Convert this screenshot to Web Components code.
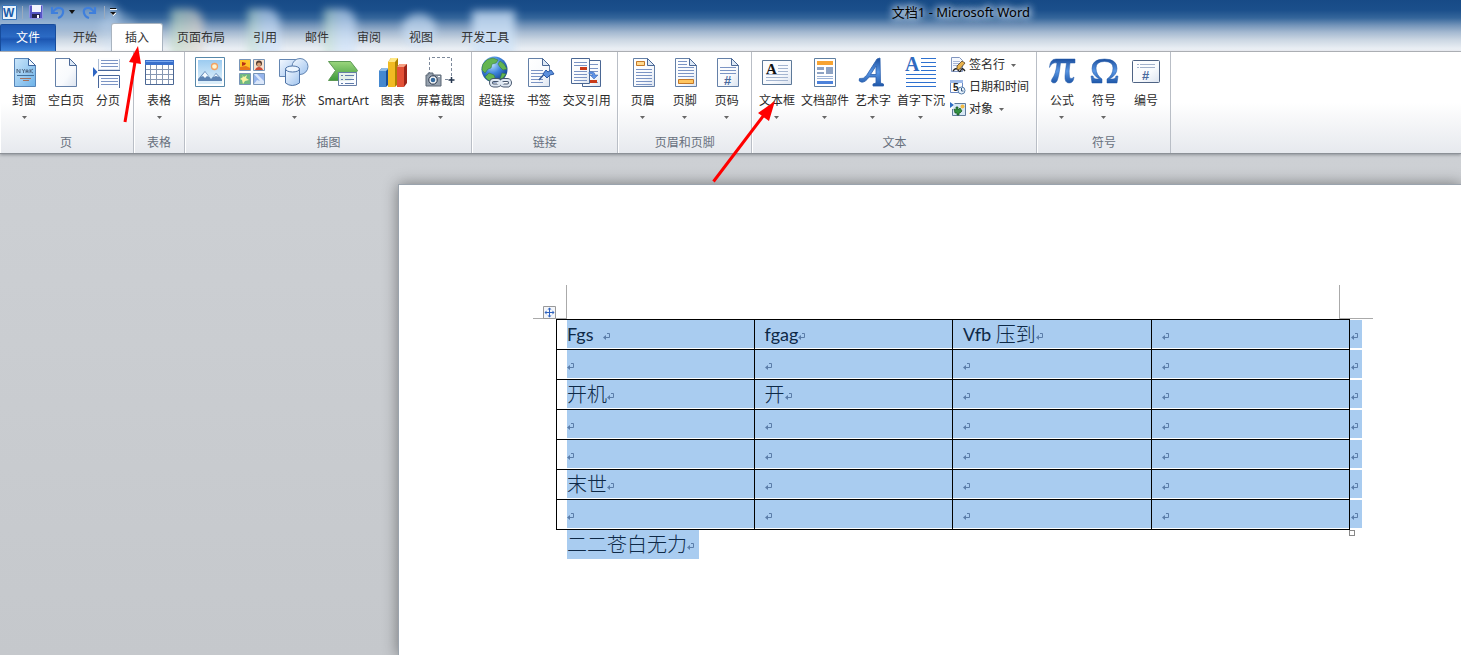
<!DOCTYPE html>
<html lang="zh-CN">
<head>
<meta charset="utf-8">
<title>文档1 - Microsoft Word</title>
<style>
html, body { margin: 0; height: 100%; }
body { font-family: "Noto Sans", "Noto Sans CJK SC", sans-serif; font-size: 12px; line-height: 16px; color: #2b2b2b; background: #cbced2; overflow: hidden; }
</style>
</head>
<body>
<word-app>
  <word-header slot="header" heading="文档1 - Microsoft Word">
    <ribbon-tab kind="file">文件</ribbon-tab>
    <ribbon-tab>开始</ribbon-tab>
    <ribbon-tab kind="active">插入</ribbon-tab>
    <ribbon-tab>页面布局</ribbon-tab>
    <ribbon-tab>引用</ribbon-tab>
    <ribbon-tab>邮件</ribbon-tab>
    <ribbon-tab>审阅</ribbon-tab>
    <ribbon-tab>视图</ribbon-tab>
    <ribbon-tab>开发工具</ribbon-tab>
  </word-header>
  <ribbon-bar slot="ribbon">
    <ribbon-group label="页">
      <ribbon-button icon="cover" drop>封面</ribbon-button>
      <ribbon-button icon="blank">空白页</ribbon-button>
      <ribbon-button icon="break">分页</ribbon-button>
    </ribbon-group>
    <ribbon-group label="表格">
      <ribbon-button icon="table" drop>表格</ribbon-button>
    </ribbon-group>
    <ribbon-group label="插图">
      <ribbon-button icon="picture">图片</ribbon-button>
      <ribbon-button icon="clipart">剪贴画</ribbon-button>
      <ribbon-button icon="shapes" drop>形状</ribbon-button>
      <ribbon-button icon="smartart">SmartArt</ribbon-button>
      <ribbon-button icon="chart">图表</ribbon-button>
      <ribbon-button icon="screenshot" drop>屏幕截图</ribbon-button>
    </ribbon-group>
    <ribbon-group label="链接">
      <ribbon-button icon="link">超链接</ribbon-button>
      <ribbon-button icon="bookmark">书签</ribbon-button>
      <ribbon-button icon="crossref">交叉引用</ribbon-button>
    </ribbon-group>
    <ribbon-group label="页眉和页脚">
      <ribbon-button icon="head" drop>页眉</ribbon-button>
      <ribbon-button icon="foot" drop>页脚</ribbon-button>
      <ribbon-button icon="pagenum" drop>页码</ribbon-button>
    </ribbon-group>
    <ribbon-group label="文本">
      <ribbon-button icon="textbox" drop>文本框</ribbon-button>
      <ribbon-button icon="parts" drop>文档部件</ribbon-button>
      <ribbon-button icon="wordart" drop>艺术字</ribbon-button>
      <ribbon-button icon="dropcap" drop>首字下沉</ribbon-button>
      <ribbon-stack>
        <ribbon-item icon="sign" drop>签名行</ribbon-item>
        <ribbon-item icon="date">日期和时间</ribbon-item>
        <ribbon-item icon="object" drop>对象</ribbon-item>
      </ribbon-stack>
    </ribbon-group>
    <ribbon-group label="符号">
      <ribbon-button icon="pi" drop>公式</ribbon-button>
      <ribbon-button icon="omega" drop>符号</ribbon-button>
      <ribbon-button icon="number">编号</ribbon-button>
    </ribbon-group>
  </ribbon-bar>
  <doc-page slot="page"></doc-page>
</word-app>

<script>
const pageShape = (x, y, w, h, extra = '') =>
  `<path d="M${x+.5} ${y+.5}h${w-8}l7 7v${h-8}h${-(w-1)}z" fill="url(#paper)" stroke="#6480a8"/><path d="M${x+w-7.5} ${y+.5}v7h7z" fill="#dce8f6" stroke="#4b6896" stroke-linejoin="round"/>${extra}`;
const lines = (x, w, ys, c = '#7b94c4') => `<path d="${ys.map(y => `M${x} ${y}.5h${w}`).join('')}" stroke="${c}"/>`;
const DEFS = `<defs>
 <linearGradient id="paper" x1="0" y1="0" x2="1" y2="1"><stop offset="0" stop-color="#fff"/><stop offset=".6" stop-color="#f8fafd"/><stop offset="1" stop-color="#dce4f0"/></linearGradient>
 <linearGradient id="sky" x1="0" y1="0" x2="0" y2="1"><stop offset="0" stop-color="#9ccbf0"/><stop offset="1" stop-color="#e4f4fd"/></linearGradient>
 <linearGradient id="cov" x1="0" y1="0" x2="1" y2="1"><stop offset="0" stop-color="#cbe6fa"/><stop offset="1" stop-color="#6db2e8"/></linearGradient>
 <linearGradient id="blue" x1="0" y1="0" x2="0" y2="1"><stop offset="0" stop-color="#1c4f9e"/><stop offset=".5" stop-color="#5896e4"/><stop offset="1" stop-color="#1f57a8"/></linearGradient>
 <linearGradient id="soft" x1="0" y1="0" x2="1" y2="1"><stop offset="0" stop-color="#f4f9ff"/><stop offset="1" stop-color="#9fc3ee"/></linearGradient>
 <linearGradient id="green" x1="0" y1="0" x2="0" y2="1"><stop offset="0" stop-color="#9bd67d"/><stop offset="1" stop-color="#3e9a3b"/></linearGradient>
 <radialGradient id="globe" cx=".4" cy=".3" r=".7"><stop offset="0" stop-color="#bfe2ff"/><stop offset=".5" stop-color="#3f86dc"/><stop offset="1" stop-color="#123f90"/></radialGradient>
</defs>`;
const ICONS = {
 cover: `<path d="M6.500 1.500h14l7 7v21h-21z" fill="url(#cov)" stroke="#5685b8"/><path d="M20.500 1.500v7h7z" fill="#f0f8ff" stroke="#3d659c"/><path d="M9 16v-4l3 4v-4M14 12l1.500 2v2m0-2l1.500-2M18 16v-3h2v3m0-1.500h-2M22 16v-4m3 0l-3 2 3 2" fill="none" stroke="#4b6380" stroke-width=".9"/><path d="M9 18.500h17" stroke="#42709c"/><path d="M12 21.500h11M15 23.500h6" stroke="#a5715c"/>`,
 blank: pageShape(5,1,22,29),
 break: `<path d="M0 9l4.500 5L0 19z" fill="#2e66c4" transform="translate(1 1)"/><path d="M7 1v12h21V1z" fill="#fcfdff"/><path d="M6.500 2v11h21V2" fill="none" stroke="#b0bfd4"/><path d="M6 13.500h22" stroke="#48669a"/>${lines(9,17,[3,6,9])}<path d="M6.500 31V18.500h21V31" fill="#fcfdff" stroke="#48669a"/>${lines(9,17,[21,24,27])}`,
 table: `<path d="M2.500 3.500h28v24h-28z" fill="#fff" stroke="#4b6794"/><path d="M2 3h29v5H2z" fill="#3a70cb"/><path d="M3 4h27v1H3z" fill="#79a8ee"/><path d="M7.500 8v19M13.500 8v19M19.500 8v19M25.500 8v19M3 12.500h27M3 17.500h27M3 22.500h27" stroke="#8697b2"/>`,
 picture: `<path d="M1.500 .5h29v29h-29z" fill="#fff" stroke="#5788aa"/><path d="M4 3h24v24H4z" fill="url(#sky)"/><circle cx="20.500" cy="9.500" r="3" fill="#fff5cf" stroke="#f2a263" stroke-width="1.300"/><path d="M4 22l7-8 6 8 5-6 6 6v2H4z" fill="#5d84b4"/><path d="M7 20l4-5 4 5-2-1-2 2-2-2zM19 20l3-3 3 3-3-1z" fill="#f4fbff"/><path d="M4 24h24v3H4z" fill="#dbeefa"/>`,
 clipart: `<g stroke="#7895b8"><path d="M3.500 2.500h11v11h-11z" fill="#ffc326"/><path d="M17.500 2.500h11v11h-11z" fill="#f8e1ce"/><path d="M3.500 16.500h11v11h-11z" fill="#6fb882"/><path d="M17.500 16.500h11v11h-11z" fill="#dbe7fa"/></g><path d="M4 10l6-1 4 2v2H4z" fill="#e87518"/><path d="M6 5l4 1-1 2-3 1z" fill="#b83116"/><circle cx="23" cy="6.500" r="3" fill="#543c32"/><circle cx="23" cy="7.500" r="2" fill="#d8a178"/><path d="M19 13q1-3 4-3t4 3z" fill="#cd4935"/><path d="M6 18l2 2 3-2-1 3 3 2-4 1-2 3-1-4-2-1 3-2z" fill="#f9f5a0"/><path d="M18 17l6 7-3-1-3 4zM21 17h7v7z" fill="#96b4ec"/>`,
 shapes: `<path d="M1.500 2.500h17v17h-17z" fill="url(#soft)" stroke="#6486b2"/><circle cx="22" cy="9.500" r="8" fill="url(#soft)" stroke="#6486b2"/><path d="M7.500 12v14q6.500 5 14 0V12z" fill="url(#soft)" stroke="#4e73a6"/><ellipse cx="14.500" cy="12" rx="7" ry="3" fill="#edf6ff" stroke="#4e73a6"/>`,
 smartart: `<path d="M1.500 4.500h22l7 9-7 10h-22l7-10z" fill="url(#green)" stroke="#5c9954"/><path d="M11.500 15.500h18v13h-18z" fill="#f8fbff" fill-opacity=".88" stroke="#667ea6"/><path d="M14 18.500h2M14 22.500h2M14 26.500h2M18 18.500h9M18 22.500h9M18 26.500h9" stroke="#607cab"/>`,
 chart: `<path d="M2 14l3-3h7v16l-3 3H2z" fill="#1c4f95"/><path d="M2 14h7v16H2z" fill="#4488d0"/><path d="M2 14l3-3h7l-3 3z" fill="#8ebbe8"/><path d="M11 5l3-4h7v26l-3 3h-7z" fill="#ad8200"/><path d="M11 5h7v25h-7z" fill="#f1bb22"/><path d="M11 5l3-4h7l-3 4z" fill="#ffe783"/><path d="M20 10l3-3h7v19l-3 4h-7z" fill="#9c2519"/><path d="M20 10h7v20h-7z" fill="#e35136"/><path d="M20 10l3-3h7l-3 3z" fill="#f7a083"/>`,
 screenshot: `<path d="M4.500 18V.5h22v22H18" fill="none" stroke="#7d899b" stroke-dasharray="3 2"/><path d="M26.500 20v6m-3-3h6" stroke="#26374f" stroke-width="1.500"/><path d="M1 18h2v-2h5v2h8v11H1z" fill="#95a0ad" stroke="#5a6675"/><circle cx="8" cy="23" r="4.200" fill="#f5f8fb" stroke="#273346"/><circle cx="8" cy="23" r="2.300" fill="#35699c"/><path d="M13 19.500h2" stroke="#fff"/>`,
 link: `<g transform="translate(-1 0)"><circle cx="14.500" cy="12.500" r="13" fill="url(#globe)"/><path d="M3 7q4-6 10-6l5 2-2 3-4 1-1 4-3 1-3 4-3-3q0-3 1-6zM20 4l4 3 3 5-4 1-3-3-2-3zM9 16l5 2 1 3-3 4q-5-2-7-5zM22 16l4 1-3 4-3 1z" fill="#63b552" stroke="#3b7c3f" stroke-width=".6"/><g fill="none" stroke="#44546c" stroke-width="4"><rect x="11" y="23" width="9" height="5.500" rx="2.700"/><rect x="21" y="23" width="9" height="5.500" rx="2.700"/></g><g fill="none" stroke="#dfe8f3" stroke-width="2"><rect x="11" y="23" width="9" height="5.500" rx="2.700"/><rect x="21" y="23" width="9" height="5.500" rx="2.700"/><path d="M17 26h7"/></g></g>`,
 bookmark: pageShape(5,1,22,29) + lines(8,12,[13,16,19,22,25]) + `<path d="M16 23l6-7" stroke="#365d99" stroke-width="1.500"/><path d="M20 17l3-4 2 2 3-2 3 4-4 1-3 3z" fill="#5b8fdc" stroke="#2a58a4"/>`,
 crossref: `<g transform="translate(-1 0)"><path d="M12.500 3.500h18v26h-18z" fill="url(#paper)" stroke="#4a6794"/>${lines(20,8,[7,11,14,25])}<path d="M1.500 1.500h18v25h-18z" fill="url(#paper)" stroke="#4a6794"/>${lines(4,13,[5,8,14,17,20,23])}<path d="M10 10h7v3h-7zM20 23h7v3h-7z" fill="#c93a18"/><path d="M19 15q6-1 6 3h3l-4 4-4-4h3q-1-2-4-1z" fill="#5e93e8" stroke="#2b5ba7" stroke-width=".5"/></g>`,
 head: pageShape(6,1,22,29) + lines(9,16,[12,15,18,21,24,27]) + `<path d="M9.500 4.500h8v4h-8z" fill="#ffd98f" stroke="#c37829"/>`,
 foot: pageShape(6,1,22,29) + lines(9,9,[4,7]) + lines(9,16,[10,13,16,19]) + `<path d="M9.500 22.500h15v4h-15z" fill="#ffc55f" stroke="#c37829"/>`,
 pagenum: pageShape(6,1,22,29) + lines(9,16,[10,13,16]) + `<text x="13" y="28" font-family="Liberation Sans" font-size="13" font-weight="bold" fill="#49699d">#</text>`,
 textbox: `<path d="M1.500 3.500h29v24h-29z" fill="url(#paper)" stroke="#5d7999"/><text x="5" y="17" font-family="Liberation Serif" font-size="15" font-weight="bold" fill="#111">A</text>${lines(17,10,[8,11,14],'#a4b5d0')}${lines(5,22,[17,20,23],'#a4b5d0')}`,
 parts: `<path d="M5.500 1.500h21v28h-21z" fill="#fff" stroke="#5f7fa2"/><path d="M8 4h16v4H8z" fill="#f7a332"/><path d="M8 10h7v3H8zM8 15h7v2H8zM17 10h7v7h-7z" fill="#8ea3c4"/>${lines(8,16,[19,21],'#9eb4d6')}<path d="M8 24h16v3H8z" fill="#4d82da"/>`,
 wordart: `<path transform="translate(-3 0)" d="M5.500 21.500q4 1 7-3L23 2l3-1 .5 25 3 1v2H19v-2l3-1v-6h-7q-4 6-8 5-3-1-1.500-3.500zM16.500 17.500H22V9z" fill="url(#blue)" stroke="#2a5eac" stroke-width=".8" fill-rule="evenodd"/>`,
 dropcap: `<text x="0" y="14" font-family="Liberation Serif" font-size="20" font-weight="bold" fill="#2f6ac0">A</text>${lines(16,15,[1,5,9,13],'#2e71d0')}${lines(1,30,[17,21,25,29],'#2e71d0')}`,
 pi: `<path d="M3.500 10.500Q4 2 10 2h19v4h-5q-1.500 9-.500 14 1 3 4.500 0-.5 6-5 6-4.500 0-4-7 .5-6 1.500-13h-6Q13 19 11 24q-1 2-3 2-4-.5-2-4 4-5 5-16-5-1-7.500 4.500z" fill="url(#blue)" stroke="#2158a8" stroke-width=".5"/>`,
 omega: `<path d="M3 19h2q.5 3 3 3h3.500Q4 18 4 11.500 4 2 16.500 2T29 11.500Q29 18 21.500 22H25q2.500 0 3-3h2l-1 7H19v-4q6-4 6-11 0-6.500-8.500-6.500T8 11q0 7 6 11v4H4z" fill="url(#blue)" stroke="#2158a8" stroke-width=".5"/>`,
 number: `<path d="M2.500 4.500q0-1 1-1h25q1 0 1 1v20q0 1-1 1h-25q-1 0-1-1z" fill="url(#paper)" stroke="#4e6384"/><path d="M7 7.500h2M7 10.500h2M10 7.500h15M10 10.500h15" stroke="#a2b2cc"/><text x="12" y="23" font-family="Liberation Sans" font-size="13" font-weight="bold" fill="#49699d">#</text>`,
 sign: `<path d="M1.500 .5h8l3 3v11h-11z" fill="#f5f8fe" stroke="#8196c0"/>${lines(3,7,[4,6,8],'#a9b8d8')}<path d="M3 14q3-4 5-1t3 0 4 1" fill="none" stroke="#222" stroke-width="1.300"/><path d="M7 9l5-5 3 2-5 6-3 1z" fill="#e8b24c" stroke="#574228" stroke-width=".8"/>`,
 date: `<path d="M.5 1.500h12v12H.5z" fill="#fff" stroke="#6b8ac4"/><path d="M0 1h13v3H0z" fill="#9db9e8"/><text x="3" y="12" font-family="Liberation Sans" font-size="10" font-weight="bold" fill="#222">5</text><circle cx="11.500" cy="11.500" r="3.500" fill="#e9f3fc" stroke="#577da8"/><path d="M11.500 9v3h2" fill="none" stroke="#395a84"/>`,
 object: `<path d="M0 1l4 3-4 3z" fill="#2d6dc4"/><path d="M4.500 2.500h11v12h-13V8" fill="#d6e7f4" stroke="#5f7c9c"/><circle cx="12.500" cy="5.500" r="2" fill="#f4bb42"/><path d="M4 8l2 1V6h2v3l2-2 2 3-2 2H9v2H7v-2H5z" fill="#339241" stroke="#17521f" stroke-width=".7"/>`,
 word: `<path d="M1.500 1.500h14v14h-14z" fill="#e9f3fd" stroke="#3977bc"/><text x="2" y="13" font-family="Liberation Sans" font-size="12" font-weight="bold" fill="#195ba8">W</text>`,
 save: `<path d="M1.500 1.500h13v13h-12l-1-1z" fill="#5656c4" stroke="#8f92e2"/><path d="M4 1h9v7H4z" fill="#f1f4fd"/><path d="M4 10h8v4H4z" fill="#25254f"/><path d="M9 11h2v3H9z" fill="#fff"/>`,
 undo: `<path d="M3 3v6h6M4 8q3-5 7-4t3 5-5 5" fill="none" stroke="#3f7fdc" stroke-width="2.200"/>`,
 redo: `<path d="M13 3v6H7M12 8Q9 3 5 4T2 9t5 5" fill="none" stroke="#3f7fdc" stroke-width="2.200"/>`,
};

function define(name, html, setup) {
  const t = document.createElement('template');
  t.innerHTML = html;
  customElements.define(name, class extends HTMLElement {
    constructor() {
      super();
      this.attachShadow({ mode: 'open' }).append(t.content.cloneNode(true));
    }
    connectedCallback() { if (setup && !this.ready) { this.ready = true; setup(this, this.shadowRoot); } }
  });
}

customElements.define('word-icon', class extends HTMLElement {
  static observedAttributes = ['name'];
  constructor() { super(); this.attachShadow({ mode: 'open' }); }
  attributeChangedCallback() {
    const s = this.getAttribute('size') || 32;
    this.shadowRoot.innerHTML = `<style>:host{display:block;flex:none}svg{display:block;overflow:visible}</style><svg width="${s}" height="${s}" viewBox="0 0 ${s} ${s}" aria-hidden="true">${DEFS}${ICONS[this.getAttribute('name')]}</svg>`;
  }
});

define('word-header', `<style>
:host{display:block;position:relative;overflow:hidden;background:linear-gradient(#174a86 0,#1b4f8b 10px,#35669b 18px,#7192b8 25px,#a3b8d0 32px,#ccd7e3 40px,#e8edf3 48px,#edf0f5 51px);border-bottom:1px solid #b1b5ba}
.ghost{position:absolute;filter:blur(4px);background:#cfe3f8;opacity:.65}
.bar{position:relative;display:flex;align-items:center;height:24px}
.qat{display:flex;align-items:center;padding-left:1px}
button{border:0;background:none;padding:0;display:block;line-height:0}
.sep{width:1px;height:13px;background:#9aaabd;margin:0 4px}
h1{margin:0 431px 0 auto;font-size:13px;font-weight:400;line-height:24px;color:#000;text-shadow:0 0 6px #d9e6f3,0 0 8px #d9e6f3,0 0 10px #d9e6f3}
nav{position:relative;display:flex;height:27px}
svg{display:block}
</style>
<div class="ghost" style="left:-10px;top:4px;width:130px;height:26px;border-radius:12px;opacity:.5"></div>
<div class="ghost" style="left:100px;top:12px;width:36px;height:44px;border-radius:18px;opacity:.3"></div>
<div class="ghost" style="left:171px;top:9px;width:32px;height:46px;border-radius:0 14px 0 0;background:linear-gradient(90deg,#bcdcc4,#e6d6cf)"></div>
<div class="ghost" style="left:248px;top:9px;width:32px;height:46px;border-radius:0 14px 0 0;background:linear-gradient(90deg,#bfe0c8,#cfe3fb 50%)"></div>
<div class="ghost" style="left:324px;top:9px;width:32px;height:46px;border-radius:0 14px 0 0;background:linear-gradient(90deg,#bfe0c8,#cfe3fb 50%)"></div>
<div class="ghost" style="left:402px;top:14px;width:34px;height:32px;border-radius:17px"></div>
<div class="ghost" style="left:472px;top:11px;width:43px;height:44px;opacity:.8"></div>
<div class="bar"><div class="qat">
<button aria-label="Word"><word-icon name="word" size="17"></word-icon></button><span class="sep"></span>
<button aria-label="保存" style="margin-left:1px"><word-icon name="save" size="16"></word-icon></button>
<button aria-label="撤消" style="margin-left:5px"><word-icon name="undo" size="16"></word-icon></button>
<button aria-label="撤消列表" style="margin-left:4px"><svg width="6" height="4"><path d="M0 0h6L3 4z" fill="#111"/></svg></button>
<button aria-label="恢复" style="margin-left:7px"><word-icon name="redo" size="16"></word-icon></button><span class="sep" style="margin-left:6px"></span>
<button aria-label="自定义"><svg width="8" height="8"><path d="M1 1.500h7M2 5h5L4.500 7.500z" stroke="#fff" fill="#fff"/><path d="M1 .5h6" stroke="#111"/><path d="M1 4h6L4 7z" fill="#111"/></svg></button>
</div><h1></h1></div>
<nav role="tablist"><slot></slot></nav>`, (el, root) => { root.querySelector('h1').textContent = el.getAttribute('heading'); });

define('ribbon-tab', `<style>
:host{display:block}
button{height:27px;padding:0 14px;border:0;background:none;font:inherit;line-height:26px;color:#333;display:block}
:host([kind=active]) button{margin:0 1px;padding:0 13px;background:#fff;box-shadow:0 0 0 1px #a9b4c0;border-radius:2px 2px 0 0}
:host([kind=file]){margin-right:3px}
:host([kind=file]) button{padding:0 15px;color:#fff;border:1px solid #174c9c;border-bottom:0;border-radius:2px 2px 0 0;background:linear-gradient(#1f58b0,#2b6ac4 45%,#1c56b2 55%,#3f86dc)}
</style><button role="tab"><slot></slot></button>`);

define('ribbon-bar', `<style>:host{display:flex;height:101px;background:linear-gradient(#fff 0,#fff 50%,#f5f6f8 70%,#e6e9ee);border-bottom:1px solid #8c9197;box-shadow:0 1px 3px #8c9197;position:relative;z-index:1}</style><slot></slot>`);

define('ribbon-group', `<style>
:host{display:flex;flex-direction:column;justify-content:space-between;padding:0 4px;border-right:1px solid #b9bec6;box-shadow:inset 1px 0 #fff}
:host(:first-child){padding-left:3px}
:host(:nth-child(n+3)){padding-right:3px}
.row{display:flex;align-items:flex-start}
.name{text-align:center;color:#68707d;padding-bottom:2px}
</style><div class="row"><slot></slot></div><div class="name"></div>`, (el, root) => { root.querySelector('.name').textContent = el.getAttribute('label'); });

define('ribbon-button', `<style>
:host{display:block}
button{min-width:42px;padding:5px 3px 0;border:0;background:none;font:inherit;color:inherit;display:flex;flex-direction:column;align-items:center;white-space:nowrap}
.label{margin-top:4px}
svg{display:none;margin-top:7px}
:host([drop]) svg{display:block}
</style><button><word-icon></word-icon><span class="label"><slot></slot></span><svg width="5" height="3"><path d="M0 0h5L2.500 3z" fill="#666"/></svg></button>`,
(el, root) => root.querySelector('word-icon').setAttribute('name', el.getAttribute('icon')));

define('ribbon-stack', `<style>:host{display:flex;flex-direction:column;padding:2px 0 0 2px}</style><slot></slot>`);
define('ribbon-item', `<style>
:host{display:block}
button{height:22px;border:0;padding:0 4px 0 0;background:none;font:inherit;color:inherit;display:flex;align-items:center;gap:3px;white-space:nowrap}
svg{display:none;margin-left:3px}
:host([drop]) svg{display:block}
</style><button><word-icon size="16"></word-icon><span><slot></slot></span><svg width="5" height="3"><path d="M0 0h5L2.500 3z" fill="#666"/></svg></button>`,
(el, root) => root.querySelector('word-icon').setAttribute('name', el.getAttribute('icon')));

define('para-mark', `<style>:host{display:block;flex:none}svg{display:block}</style><svg width="7" height="13" viewBox="0 0 7 13"><path d="M4 5.500h2.500v4H2" fill="none" stroke="#5b7da9"/><path d="M0 9.500L3 7v5z" fill="#5b7da9"/></svg>`);

define('doc-page', `<style>
:host{display:grid;grid-template-columns:minmax(0,1fr);padding:31px 0 0 399px;height:100%;box-sizing:border-box;background:linear-gradient(#cdd0d4,#c5c8cc)}
main{background:#fff;box-shadow:0 0 0 1px #9aa3ad,0 0 14px 1px rgba(0,0,0,.42);padding-top:100px;box-sizing:border-box;color:#0e2947}
.corners{display:flex;justify-content:space-between;margin:0 88px 0 134px}
.corners i{width:33px;height:33px;border-bottom:1px solid #aaa}
.corners .l{border-right:1px solid #aaa}.corners .r{border-left:1px solid #aaa}
.wrap{position:relative;margin:0 99px 0 157px}
.move{position:absolute;left:-13px;top:-13px}
.size{position:absolute;right:7px;bottom:-6px;width:4px;height:4px;border:1px solid #888;background:#fff}
table{width:100%;table-layout:fixed;border-collapse:separate;border-spacing:0;font-family:Lato,"Noto Sans CJK SC",sans-serif;font-size:20px;font-weight:300}
col.end{width:12px}
td{padding:0 0 1px;border:0 solid #000;border-width:0 1px 1px 0}
td:first-child{border-left-width:1px}
tr:first-child td{border-top-width:1px}
td:last-child{border-color:transparent;border-right:0}
.sel{display:flex;align-items:center;height:28px;padding-left:10px;background:#a9ccf0;line-height:28px;white-space:pre}
td:first-child .sel{margin-left:10px;padding-left:0}
td:last-child .sel{padding-left:1px}
.latin{font-size:18px;font-weight:400}
p{margin:0 0 0 168px;width:max-content;display:flex;align-items:center;height:29px;padding-right:5px;background:#a9ccf0;font:300 20px/29px Lato,"Noto Sans CJK SC",sans-serif}
</style>
<main>
<div class="corners"><i class="l"></i><i class="r"></i></div>
<div class="wrap">
<table><colgroup><col><col><col><col><col class="end"></colgroup><tbody></tbody></table>
<svg class="move" width="13" height="13"><path d="M.5.500h12v12H.5z" fill="#f4f6fa" stroke="#999"/><path d="M6.500 2v9M2 6.500h9" stroke="#2f62bd"/><path d="M6.500 1.500l2 2h-4zM6.500 11.500l2-2h-4zM1.500 6.500l2-2v4zM11.500 6.500l-2-2v4z" fill="#2f62bd"/></svg>
<span class="size"></span>
</div>
<p><span>二二苍白无力</span><para-mark></para-mark></p>
</main>`, (el, root) => {
  const L = s => `<span class="latin">${s}</span>`;
  const rows = [[L('Fgs  '), L('fgag'), L('Vfb ') + '<span>压到</span>', ''], ['', '', '', ''], ['开机', '开', '', ''], ['', '', '', ''], ['', '', '', ''], ['末世', '', '', ''], ['', '', '', '']];
  root.querySelector('tbody').innerHTML = rows.map(r => '<tr>' + [...r, ''].map(c => `<td><div class="sel">${c}<para-mark></para-mark></div></td>`).join('') + '</tr>').join('');
});

define('word-app', `<style>
:host{display:grid;grid-template-rows:auto auto 1fr;grid-template-columns:minmax(0,1fr);height:100vh;position:relative;overflow:hidden}
.notes{position:absolute;left:0;top:0;z-index:2;pointer-events:none}
</style><slot name="header"></slot><slot name="ribbon"></slot><slot name="page"></slot>
<svg class="notes" width="800" height="200" aria-hidden="true"><g stroke="#f00" stroke-width="3" fill="#f00"><path d="M125 122L135 62M713.500 181.500L764 115"/><path stroke="none" d="M138 46l3 18-12-2zM775 101l-6 20-11-8z"/></g></svg>`);
</script>
</body>
</html>
